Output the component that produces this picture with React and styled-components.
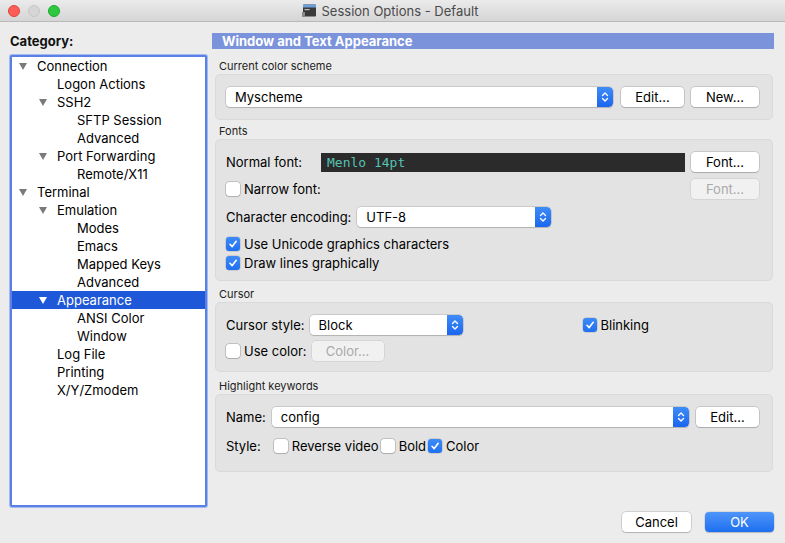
import React from "react";
import styled, { createGlobalStyle } from "styled-components";

const Global = createGlobalStyle`
  html, body { margin: 0; padding: 0; }
  body {
    background: #ececec;
    font-family: Inter, Roboto, "Liberation Sans", sans-serif;
    font-size: 13px;
    color: #000;
  }
  * { box-sizing: border-box; }
`;

const Window = styled.div`
  width: 785px;
  height: 543px;
  background: #ececec;
  display: flex;
  flex-direction: column;
  overflow: hidden;
`;

const TitleBar = styled.div`
  height: 22px;
  flex: none;
  background: linear-gradient(#ebebeb, #d5d5d5);
  border-bottom: 1px solid #b9b9b9;
  display: flex;
  align-items: center;
  position: relative;
  padding-left: 8px;
`;

const Lights = styled.div`
  display: flex;
  gap: 8px;
  position: relative;
  z-index: 1;
`;

const Light = styled.span`
  width: 12px;
  height: 12px;
  border-radius: 50%;
  background: ${(p) => p.$c};
  border: 1px solid ${(p) => p.$b};
`;

const Title = styled.div`
  position: absolute;
  left: 0;
  right: 0;
  top: 0;
  height: 21px;
  display: flex;
  align-items: center;
  justify-content: center;
  gap: 4px;
  font-size: 13px;
  color: #4a4a4a;
  padding-right: 4px;
`;

const Main = styled.div`
  display: grid;
  grid-template-columns: 197px 562px;
  column-gap: 5px;
  padding: 11px 11px 0 10px;
`;

const LeftCol = styled.div`
  display: flex;
  flex-direction: column;
`;

const CategoryLabel = styled.div`
  font-weight: 700;
  font-size: 13px;
  line-height: 16px;
  height: 16px;
  margin-bottom: 6px;
  color: #111;
`;

const TreeBox = styled.div`
  height: 452px;
  background: #fff;
  border: 2px solid #5a80e6;
  border-radius: 2px;
  box-shadow: 0 0 0 1px #a3b9f2;
`;

const TreeRow = styled.div`
  height: 18px;
  display: flex;
  align-items: center;
  padding-left: ${(p) => 7 + p.$level * 20}px;
  background: ${(p) => (p.$sel ? "#1e58d8" : "transparent")};
  color: ${(p) => (p.$sel ? "#fff" : "#000")};
  font-size: 13px;
`;

const Toggle = styled.span`
  width: 18px;
  flex: none;
  display: flex;
  align-items: center;
`;

const RightCol = styled.div`
  display: flex;
  flex-direction: column;
`;

const Header = styled.div`
  height: 16px;
  background: #7b93db;
  color: #fff;
  font-weight: 700;
  font-size: 13px;
  line-height: 16px;
  padding-left: 10px;
  margin-bottom: 6px;
`;

const SectionLabel = styled.div`
  font-size: 11px;
  line-height: 13px;
  padding: ${(p) => 5 + (p.$extra || 0)}px 0 1px 7px;
  color: #222;
`;

const Group = styled.div`
  margin: 0 1px 0 3px;
  background: #e3e3e3;
  border: 1px solid #dadada;
  border-radius: 5px;
  padding: 12px 13px ${(p) => p.$pb || 12}px 9px;
  display: flex;
  flex-direction: column;
`;

const Row = styled.div`
  display: flex;
  align-items: center;
  height: ${(p) => p.$h || 20}px;
  margin-top: ${(p) => p.$mt || 0}px;
  padding-left: 1px;
`;

const Label = styled.span`
  font-size: 13px;
  width: ${(p) => (p.$w ? `${p.$w}px` : "auto")};
  flex: none;
  margin-right: ${(p) => p.$mr || 0}px;
`;

const Spacer = styled.div`
  flex: 1;
`;

const SelectBox = styled.div`
  height: 20px;
  width: ${(p) => (p.$w ? `${p.$w}px` : "auto")};
  flex: ${(p) => (p.$w ? "none" : "1")};
  background: #fff;
  border-radius: 4px;
  box-shadow: 0 0 0 0.5px rgba(0, 0, 0, 0.22), 0 1px 1px rgba(0, 0, 0, 0.12);
  display: flex;
  align-items: center;
  justify-content: space-between;
  padding-left: 9px;
  font-size: 13px;
  overflow: hidden;
`;

const Stepper = styled.span`
  width: 16px;
  height: 20px;
  background: linear-gradient(#3f8cf8, #1a66ee);
  border-radius: 0 4px 4px 0;
  display: flex;
  align-items: center;
  justify-content: center;
`;

const Button = styled.button`
  height: 20px;
  width: ${(p) => p.$w}px;
  flex: none;
  margin-left: ${(p) => p.$ml || 0}px;
  font-family: inherit;
  font-size: 13px;
  padding: 0;
  border-radius: 4px;
  border: none;
  background: ${(p) =>
    p.$primary ? "linear-gradient(#4f95fa, #1e6ff0)" : p.$disabled ? "#f1f1f1" : "#fff"};
  color: ${(p) => (p.$primary ? "#fff" : p.$disabled ? "#a9a9a9" : "#000")};
  box-shadow: ${(p) =>
    p.$primary
      ? "0 0 0 0.5px rgba(0,0,0,0.15), 0 1px 1px rgba(0,0,0,0.15)"
      : p.$disabled
      ? "0 0 0 0.5px rgba(0,0,0,0.12)"
      : "0 0 0 0.5px rgba(0,0,0,0.24), 0 1px 1px rgba(0,0,0,0.14)"};
`;

const FontField = styled.div`
  flex: 1;
  height: 19px;
  background: #2b2b2b;
  color: #55c2b4;
  font-family: "DejaVu Sans Mono", "Liberation Mono", monospace;
  font-size: 13px;
  line-height: 19px;
  padding-left: 6px;
`;

const CheckWrap = styled.label`
  display: flex;
  align-items: center;
  gap: 4px;
  font-size: 13px;
  margin-left: ${(p) => p.$ml || 0}px;
  margin-right: ${(p) => p.$mr || 0}px;
`;

const Box = styled.span`
  width: 14px;
  height: 14px;
  border-radius: 3px;
  flex: none;
  background: ${(p) => (p.$on ? "linear-gradient(#3d8bf8, #2070f0)" : "#fff")};
  box-shadow: ${(p) =>
    p.$on ? "0 0 0 0.5px rgba(0,0,0,0.2)" : "0 0 0 0.5px rgba(0,0,0,0.3), 0 1px 1px rgba(0,0,0,0.1)"};
  display: flex;
  align-items: center;
  justify-content: center;
`;

const Footer = styled.div`
  display: flex;
  justify-content: flex-end;
  gap: 14px;
  padding: 5px 11px 0 0;
`;

const Tri = ({ white }) => (
  <svg width="8" height="7" viewBox="0 0 8 7">
    <path d="M0 0 H8 L4 7 Z" fill={white ? "#fff" : "#7a7a7a"} />
  </svg>
);

const StepIcon = () => (
  <svg width="8" height="12" viewBox="0 0 8 12">
    <path d="M1.5 4.5 L4 2 L6.5 4.5 M1.5 7.5 L4 10 L6.5 7.5" stroke="#fff" strokeWidth="1.4" fill="none" strokeLinecap="round" strokeLinejoin="round" />
  </svg>
);

const Select = ({ value, w }) => (
  <SelectBox $w={w}>
    <span>{value}</span>
    <Stepper>
      <StepIcon />
    </Stepper>
  </SelectBox>
);

const Check = ({ on, children, ml, mr }) => (
  <CheckWrap $ml={ml} $mr={mr}>
    <Box $on={on}>
      {on && (
        <svg width="10" height="10" viewBox="0 0 10 10">
          <path d="M2 5.3 L4.2 7.6 L8.2 2.3" stroke="#fff" strokeWidth="1.6" fill="none" strokeLinecap="round" strokeLinejoin="round" />
        </svg>
      )}
    </Box>
    {children}
  </CheckWrap>
);

const AppIcon = () => (
  <svg width="15" height="15" viewBox="0 0 15 15">
    <rect x="1" y="1.5" width="13" height="12" rx="1" fill="#3a3a3a" />
    <rect x="1" y="1.5" width="13" height="3" fill="#6f9fd8" />
    <rect x="2.5" y="6" width="5" height="1.2" fill="#bbb" />
    <rect x="0" y="9" width="3" height="5" fill="#8a8a8a" />
  </svg>
);

const tree = [
  { t: "Connection", l: 0, e: true },
  { t: "Logon Actions", l: 1 },
  { t: "SSH2", l: 1, e: true },
  { t: "SFTP Session", l: 2 },
  { t: "Advanced", l: 2 },
  { t: "Port Forwarding", l: 1, e: true },
  { t: "Remote/X11", l: 2 },
  { t: "Terminal", l: 0, e: true },
  { t: "Emulation", l: 1, e: true },
  { t: "Modes", l: 2 },
  { t: "Emacs", l: 2 },
  { t: "Mapped Keys", l: 2 },
  { t: "Advanced", l: 2 },
  { t: "Appearance", l: 1, e: true, s: true },
  { t: "ANSI Color", l: 2 },
  { t: "Window", l: 2 },
  { t: "Log File", l: 1 },
  { t: "Printing", l: 1 },
  { t: "X/Y/Zmodem", l: 1 },
];

export default function App() {
  return (
    <>
      <Global />
      <Window>
        <TitleBar>
          <Lights>
            <Light $c="#fc5f57" $b="#e0443e" />
            <Light $c="#d6d6d6" $b="#c6c6c6" />
            <Light $c="#2ec840" $b="#1ea82e" />
          </Lights>
          <Title>
            <AppIcon />
            Session Options - Default
          </Title>
        </TitleBar>
        <Main>
          <LeftCol>
            <CategoryLabel>Category:</CategoryLabel>
            <TreeBox>
              {tree.map((n, i) => (
                <TreeRow key={i} $level={n.l} $sel={n.s}>
                  <Toggle>{n.e && <Tri white={n.s} />}</Toggle>
                  {n.t}
                </TreeRow>
              ))}
            </TreeBox>
          </LeftCol>
          <RightCol>
            <Header>Window and Text Appearance</Header>

            <SectionLabel>Current color scheme</SectionLabel>
            <Group>
              <Row>
                <Select value="Myscheme" />
                <Button $w={63} $ml={8}>Edit...</Button>
                <Button $w={68} $ml={7}>New...</Button>
              </Row>
            </Group>

            <SectionLabel>Fonts</SectionLabel>
            <Group $pb={9}>
              <Row>
                <Label $w={95}>Normal font:</Label>
                <FontField>Menlo 14pt</FontField>
                <Button $w={68} $ml={6}>Font...</Button>
              </Row>
              <Row $mt={7}>
                <Check>Narrow font:</Check>
                <Spacer />
                <Button $w={68} $disabled>Font...</Button>
              </Row>
              <Row $mt={8}>
                <Label $mr={6}>Character encoding:</Label>
                <Select value="UTF-8" w={194} />
              </Row>
              <Row $mt={9} $h={16}>
                <Check on>Use Unicode graphics characters</Check>
              </Row>
              <Row $mt={3} $h={16}>
                <Check on>Draw lines graphically</Check>
              </Row>
            </Group>

            <SectionLabel $extra={2}>Cursor</SectionLabel>
            <Group $pb={10}>
              <Row>
                <Label $mr={5}>Cursor style:</Label>
                <Select value="Block" w={153} />
                <Check on ml={120}>Blinking</Check>
              </Row>
              <Row $mt={6}>
                <Check mr={5}>Use color:</Check>
                <Button $w={72} $disabled>Color...</Button>
              </Row>
            </Group>

            <SectionLabel $extra={3}>Highlight keywords</SectionLabel>
            <Group $pb={16}>
              <Row>
                <Label $mr={6}>Name:</Label>
                <Select value="config" />
                <Button $w={63} $ml={7}>Edit...</Button>
              </Row>
              <Row $mt={10} $h={18}>
                <Label $mr={13}>Style:</Label>
                <Check mr={2}>Reverse video</Check>
                <Check mr={2}>Bold</Check>
                <Check on>Color</Check>
              </Row>
            </Group>
          </RightCol>
        </Main>
        <Footer>
          <Button $w={69}>Cancel</Button>
          <Button $w={69} $primary>OK</Button>
        </Footer>
      </Window>
    </>
  );
}
